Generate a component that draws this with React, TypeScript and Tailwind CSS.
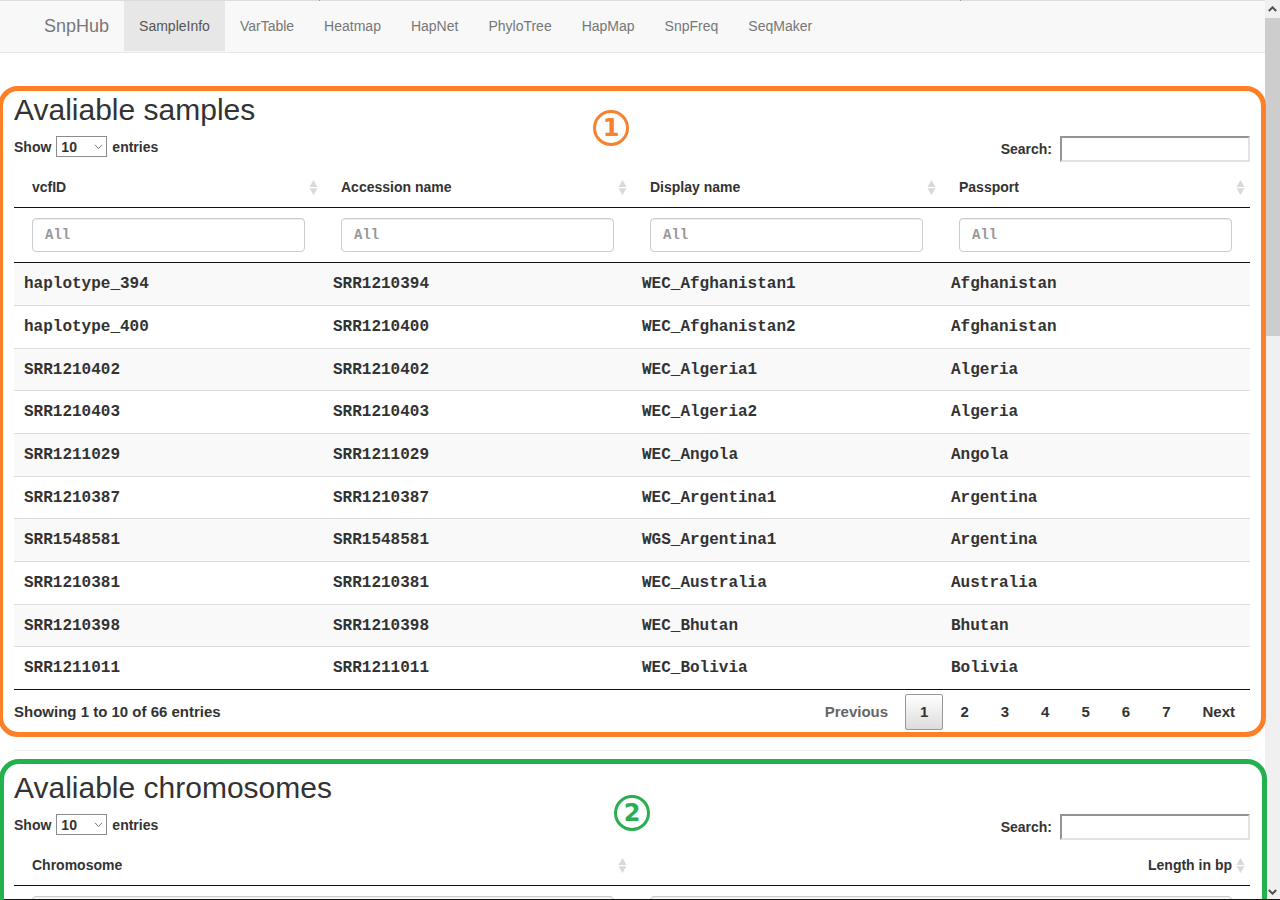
import { useState } from "react";

const tabs = ["SampleInfo", "VarTable", "Heatmap", "HapNet", "PhyloTree", "HapMap", "SnpFreq", "SeqMaker"];

const samples = [
  ["haplotype_394", "SRR1210394", "WEC_Afghanistan1", "Afghanistan"],
  ["haplotype_400", "SRR1210400", "WEC_Afghanistan2", "Afghanistan"],
  ["SRR1210402", "SRR1210402", "WEC_Algeria1", "Algeria"],
  ["SRR1210403", "SRR1210403", "WEC_Algeria2", "Algeria"],
  ["SRR1211029", "SRR1211029", "WEC_Angola", "Angola"],
  ["SRR1210387", "SRR1210387", "WEC_Argentina1", "Argentina"],
  ["SRR1548581", "SRR1548581", "WGS_Argentina1", "Argentina"],
  ["SRR1210381", "SRR1210381", "WEC_Australia", "Australia"],
  ["SRR1210398", "SRR1210398", "WEC_Bhutan", "Bhutan"],
  ["SRR1211011", "SRR1211011", "WEC_Bolivia", "Bolivia"],
];

const MONO = "font-['Liberation_Mono',monospace]";

function Navbar() {
  return (
    <header className="border-b border-[#e7e7e7] bg-[#f8f8f8]">
      <div className="flex h-px bg-[#dcdcdc]">
        <span className="w-[320px] border-r border-[#999]" />
        <span className="w-[641px] border-r border-[#999]" />
      </div>
      <nav className="flex pb-px pl-[29px]">
        <a href="#" className="flex items-center px-[15px] text-lg text-[#777]">SnpHub</a>
        {tabs.map((tab, i) => (
          <a
            key={tab}
            href={"#" + tab}
            className={
              i === 0
                ? "bg-[#e7e7e7] px-[15px] py-[15px] text-sm text-[#555]"
                : "px-[15px] py-[15px] text-sm text-[#777]"
            }
          >
            {tab}
          </a>
        ))}
      </nav>
    </header>
  );
}

function SortIcon() {
  return (
    <svg width="9" height="15" viewBox="0 0 9 15" fill="#d9d9d9" aria-hidden="true">
      <path d="M4.5 0 8.5 7H.5zM.5 8.2h8L4.5 15z" />
    </svg>
  );
}

function Controls({ id }: { id: string }) {
  const [size, setSize] = useState("10");
  return (
    <div className="flex items-start justify-between text-sm">
      <div className="flex items-center">
        <label htmlFor={id + "-size"}>Show</label>
        <span className="relative mx-[5px] flex">
          <select
            id={id + "-size"}
            value={size}
            onChange={(e) => setSize(e.target.value)}
            className="h-[21px] w-[51px] appearance-none border border-[#8c8c8c] bg-white pl-1 text-sm leading-none"
          >
            <option>10</option>
            <option>25</option>
            <option>50</option>
          </select>
          <svg className="pointer-events-none absolute top-2 right-1" width="9" height="6" viewBox="0 0 9 6" fill="none" stroke="#777">
            <path d="M1 .8 4.5 4.6 8 .8" />
          </svg>
        </span>
        <span>entries</span>
      </div>
      <label className="flex items-center gap-2">
        Search:
        <input
          type="search"
          className="h-[26px] w-[190px] border-2 border-t-[#949494] border-r-[#e2e2e2] border-b-[#e2e2e2] border-l-[#949494] bg-white px-1 outline-none"
        />
      </label>
    </div>
  );
}

function Head({ columns, rightLast }: { columns: string[]; rightLast?: boolean }) {
  return (
    <thead className="text-sm">
      <tr>
        {columns.map((c, i) => (
          <th key={c} scope="col" className="h-[46px] border-b border-[#111] pt-[5px] pr-[5px] pb-0 pl-[18px] align-middle">
            <div className="flex items-center gap-1">
              <span className={rightLast && i === columns.length - 1 ? "flex-1 text-right" : "flex-1 text-left"}>{c}</span>
              <SortIcon />
            </div>
          </th>
        ))}
      </tr>
      <tr>
        {columns.map((c) => (
          <td key={c} className="border-b border-[#111] px-[18px] py-[10px]">
            <input
              type="text"
              placeholder="All"
              aria-label={"Filter " + c}
              className={`block h-[34px] w-full rounded border border-[#ccc] bg-white px-3 text-sm font-bold shadow-[inset_0_1px_1px_rgba(0,0,0,0.075)] outline-none placeholder:text-[#999] ${MONO}`}
            />
          </td>
        ))}
      </tr>
    </thead>
  );
}

function Marker({ n, className }: { n: number; className: string }) {
  return (
    <span
      className={`absolute top-[19px] flex size-9 items-center justify-center rounded-full border-[3px] font-['DejaVu_Sans',sans-serif] text-2xl leading-none font-bold ${className}`}
    >
      {n}
    </span>
  );
}

function Samples() {
  const pageClass = "h-9 px-[14px] rounded-xs border border-transparent";
  return (
    <section className="relative -mr-px -ml-0.5 rounded-[20px] border-[5px] border-[#ff7f27] pt-0.5 pr-[11px] pb-0.5 pl-[11px]">
      <Marker n={1} className="left-[590px] border-[#f58233] text-[#f58233]" />
      <h2 className="mb-[10px] text-3xl leading-[33px] font-normal">Avaliable samples</h2>
      <Controls id="samples" />
      <table className="w-full table-fixed border-separate border-spacing-0">
        <Head columns={["vcfID", "Accession name", "Display name", "Passport"]} />
        <tbody className={`text-base leading-5 ${MONO}`}>
          {samples.map((row) => (
            <tr key={row[0]} className="h-[43px] first:h-[42px] odd:bg-[#f9f9f9] nth-[3n]:h-[42px] [&:not(:first-child)>td]:border-t">
              {row.map((cell, i) => (
                <td key={i} className="border-[#ddd] px-[10px] py-0">{cell}</td>
              ))}
            </tr>
          ))}
        </tbody>
      </table>
      <div className="flex items-center justify-between border-t border-[#111] pt-1">
        <p>Showing 1 to 10 of 66 entries</p>
        <div className="flex gap-0.5">
          <button disabled className={`${pageClass} text-[#666]`}>Previous</button>
          <button className="h-9 rounded-xs border border-[#979797] bg-linear-to-b from-white to-[#dcdcdc] px-[14px]">1</button>
          {["2", "3", "4", "5", "6", "7", "Next"].map((p) => (
            <button key={p} className={pageClass}>{p}</button>
          ))}
        </div>
      </div>
    </section>
  );
}

function Chromosomes() {
  return (
    <section className="relative -mr-0.5 -ml-px rounded-[20px] border-[5px] border-[#22b14c] pt-[7px] pr-3 pb-10 pl-[10px]">
      <Marker n={2} className="left-[610px] mt-3 border-[#2aae50] text-[#2aae50]" />
      <h2 className="mb-[10px] text-3xl leading-[33px] font-normal">Avaliable chromosomes</h2>
      <Controls id="chromosomes" />
      <table className="w-full table-fixed border-separate border-spacing-0">
        <Head columns={["Chromosome", "Length in bp"]} rightLast />
      </table>
    </section>
  );
}

function Scrollbar() {
  return (
    <div className="flex w-[15px] shrink-0 flex-col bg-[#f0f0f0]" aria-hidden="true">
      <div className="flex h-[18px] items-center justify-center">
        <svg width="9" height="6" viewBox="0 0 9 6" fill="none" stroke="#505050" strokeWidth="2">
          <path d="M.8 5 4.5 1.3 8.2 5" />
        </svg>
      </div>
      <div className="h-[318px] bg-[#cdcdcd]" />
      <div className="mt-auto flex h-[17px] items-center justify-center">
        <svg width="9" height="6" viewBox="0 0 9 6" fill="none" stroke="#505050" strokeWidth="2">
          <path d="M.8 1 4.5 4.7 8.2 1" />
        </svg>
      </div>
    </div>
  );
}

export default function App() {
  return (
    <div className="relative flex h-screen overflow-hidden bg-white font-['Liberation_Sans',Arial,sans-serif] text-[15px] leading-5 font-bold text-[#333]">
      <div className="z-10 min-w-0 flex-1">
        <div className="font-normal">
          <Navbar />
        </div>
        <main className="pt-[33px]">
          <Samples />
          <hr className="mx-[14px] mt-[13px] mb-2 border-[#eee]" />
          <Chromosomes />
        </main>
      </div>
      <Scrollbar />
      <div className="absolute right-0 bottom-0 left-1 z-20 h-px bg-[#111]" />
    </div>
  );
}
